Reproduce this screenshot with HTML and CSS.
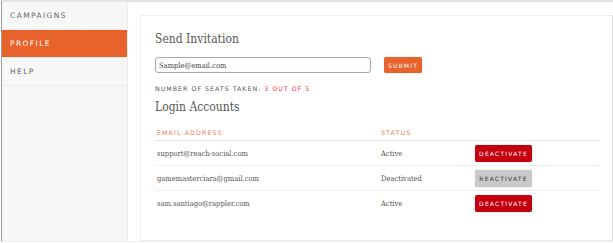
FILE: index.html
```html
<!DOCTYPE html>
<html>
<head>
  <meta charset="utf-8">
  <title>Profile</title>
  <link rel="stylesheet" href="styles.css">
</head>
<body>
  <div class="frame">
    <nav class="sidebar">
      <a class="nav-item">CAMPAIGNS</a>
      <a class="nav-item active">PROFILE</a>
      <a class="nav-item">HELP</a>
    </nav>

    <main class="main">
      <section class="card">
        <h2>Send Invitation</h2>
        <form class="invite">
          <input type="text" value="Sample@email.com">
          <button type="button" class="btn submit">SUBMIT</button>
        </form>
        <p class="seats">NUMBER OF SEATS TAKEN: <span>3 OUT OF 5</span></p>

        <h2>Login Accounts</h2>
        <table class="accounts">
          <thead>
            <tr><th class="col-email">EMAIL ADDRESS</th><th class="col-status">STATUS</th><th></th></tr>
          </thead>
          <tbody>
            <tr>
              <td>support@reach-social.com</td>
              <td>Active</td>
              <td><button class="btn deactivate">DEACTIVATE</button></td>
            </tr>
            <tr>
              <td>gamemasterciara@gmail.com</td>
              <td>Deactivated</td>
              <td><button class="btn reactivate">REACTIVATE</button></td>
            </tr>
            <tr>
              <td>sam.santiago@rappler.com</td>
              <td>Active</td>
              <td><button class="btn deactivate">DEACTIVATE</button></td>
            </tr>
          </tbody>
        </table>
      </section>
    </main>
  </div>
</body>
</html>
```

FILE: styles.css
```css
html { font-family: "DejaVu Sans", sans-serif; }
body {
  margin: 0;
  background: #fff;
}

.frame {
  display: flex;
  height: 239px;
  border-top: 2px solid #e4e4e4;
  border-left: 1px solid #9a9a9a;
  margin-left: 1px;
  border-bottom: 1px solid #eee;
}

/* left menu */
.sidebar {
  width: 125px;
  background: #f7f7f7;
  border-right: 1px solid #ececec;
  display: flex;
  flex-direction: column;
}
.nav-item {
  height: 27px;
  line-height: 27px;
  padding-left: 8px;
  font-size: 7.5px;
  letter-spacing: 1.4px;
  color: #666;
  border-bottom: 1px solid #ececec;
}
.nav-item.active {
  background: #e8632b;
  color: #fff;
}

.main {
  flex: 1;
  padding: 13px 0 0 12px;
}

.card {
  height: 208px;
  border: 1px solid #f0f0f0;
  border-right-color: #dcdcdc;
  padding: 16px 0 0 14px;
}

h2 {
  margin: 0;
  font-family: "DejaVu Serif Condensed", "DejaVu Serif", serif;
  font-stretch: condensed;
  font-weight: normal;
  font-size: 12px;
  line-height: 15px;
  color: #555;
}

.invite {
  display: flex;
  align-items: center;
  margin-top: 10px;
}
.invite input {
  width: 208px;
  height: 12px;
  padding: 1px 3px;
  border: 1px solid #aaa;
  border-radius: 3px;
  box-shadow: inset 0 0 1px #ccc;
  font-family: "DejaVu Serif Condensed", "DejaVu Serif", serif;
  font-stretch: condensed;
  font-size: 7.5px;
  color: #444;
}

.btn {
  border: 0;
  border-radius: 2px;
  font-family: "DejaVu Sans", sans-serif;
  font-size: 6px;
  letter-spacing: 1.2px;
  padding: 0;
  box-shadow: 0 0 1px rgba(0,0,0,0.35);
}
.submit {
  margin-left: 13px;
  width: 38px;
  height: 16px;
  background: #e8632b;
  color: #fff;
}

.seats {
  margin: 12px 0 8px 0;
  font-size: 6.3px;
  letter-spacing: 1px;
  color: #555;
}
.seats span { color: #f03a3a; }

.accounts {
  margin-top: 14px;
  width: 444px;
  border-collapse: collapse;
}
.accounts th {
  text-align: left;
  font-weight: normal;
  font-size: 6.3px;
  letter-spacing: 1.1px;
  color: #ee7a4f;
  height: 11px;
  vertical-align: top;
  padding: 0 0 0 2px;
  border-bottom: 1px solid #e8e8e8;
}
.col-email { width: 222px; }
.col-status { width: 92px; }

.accounts td {
  height: 24px;
  padding: 0 0 0 2px;
  font-family: "DejaVu Serif Condensed", "DejaVu Serif", serif;
  font-stretch: condensed;
  font-size: 7.5px;
  color: #555;
  border-bottom: 1px solid #efefef;
  vertical-align: middle;
}
.accounts tbody tr:last-child td { border-bottom: 0; }

.deactivate, .reactivate {
  width: 57px;
  height: 17px;
  margin-top: 1px;
}
.deactivate {
  background: #c4000f;
  color: #fff;
}
.reactivate {
  background: #c9c9c9;
  color: #333;
}
```
